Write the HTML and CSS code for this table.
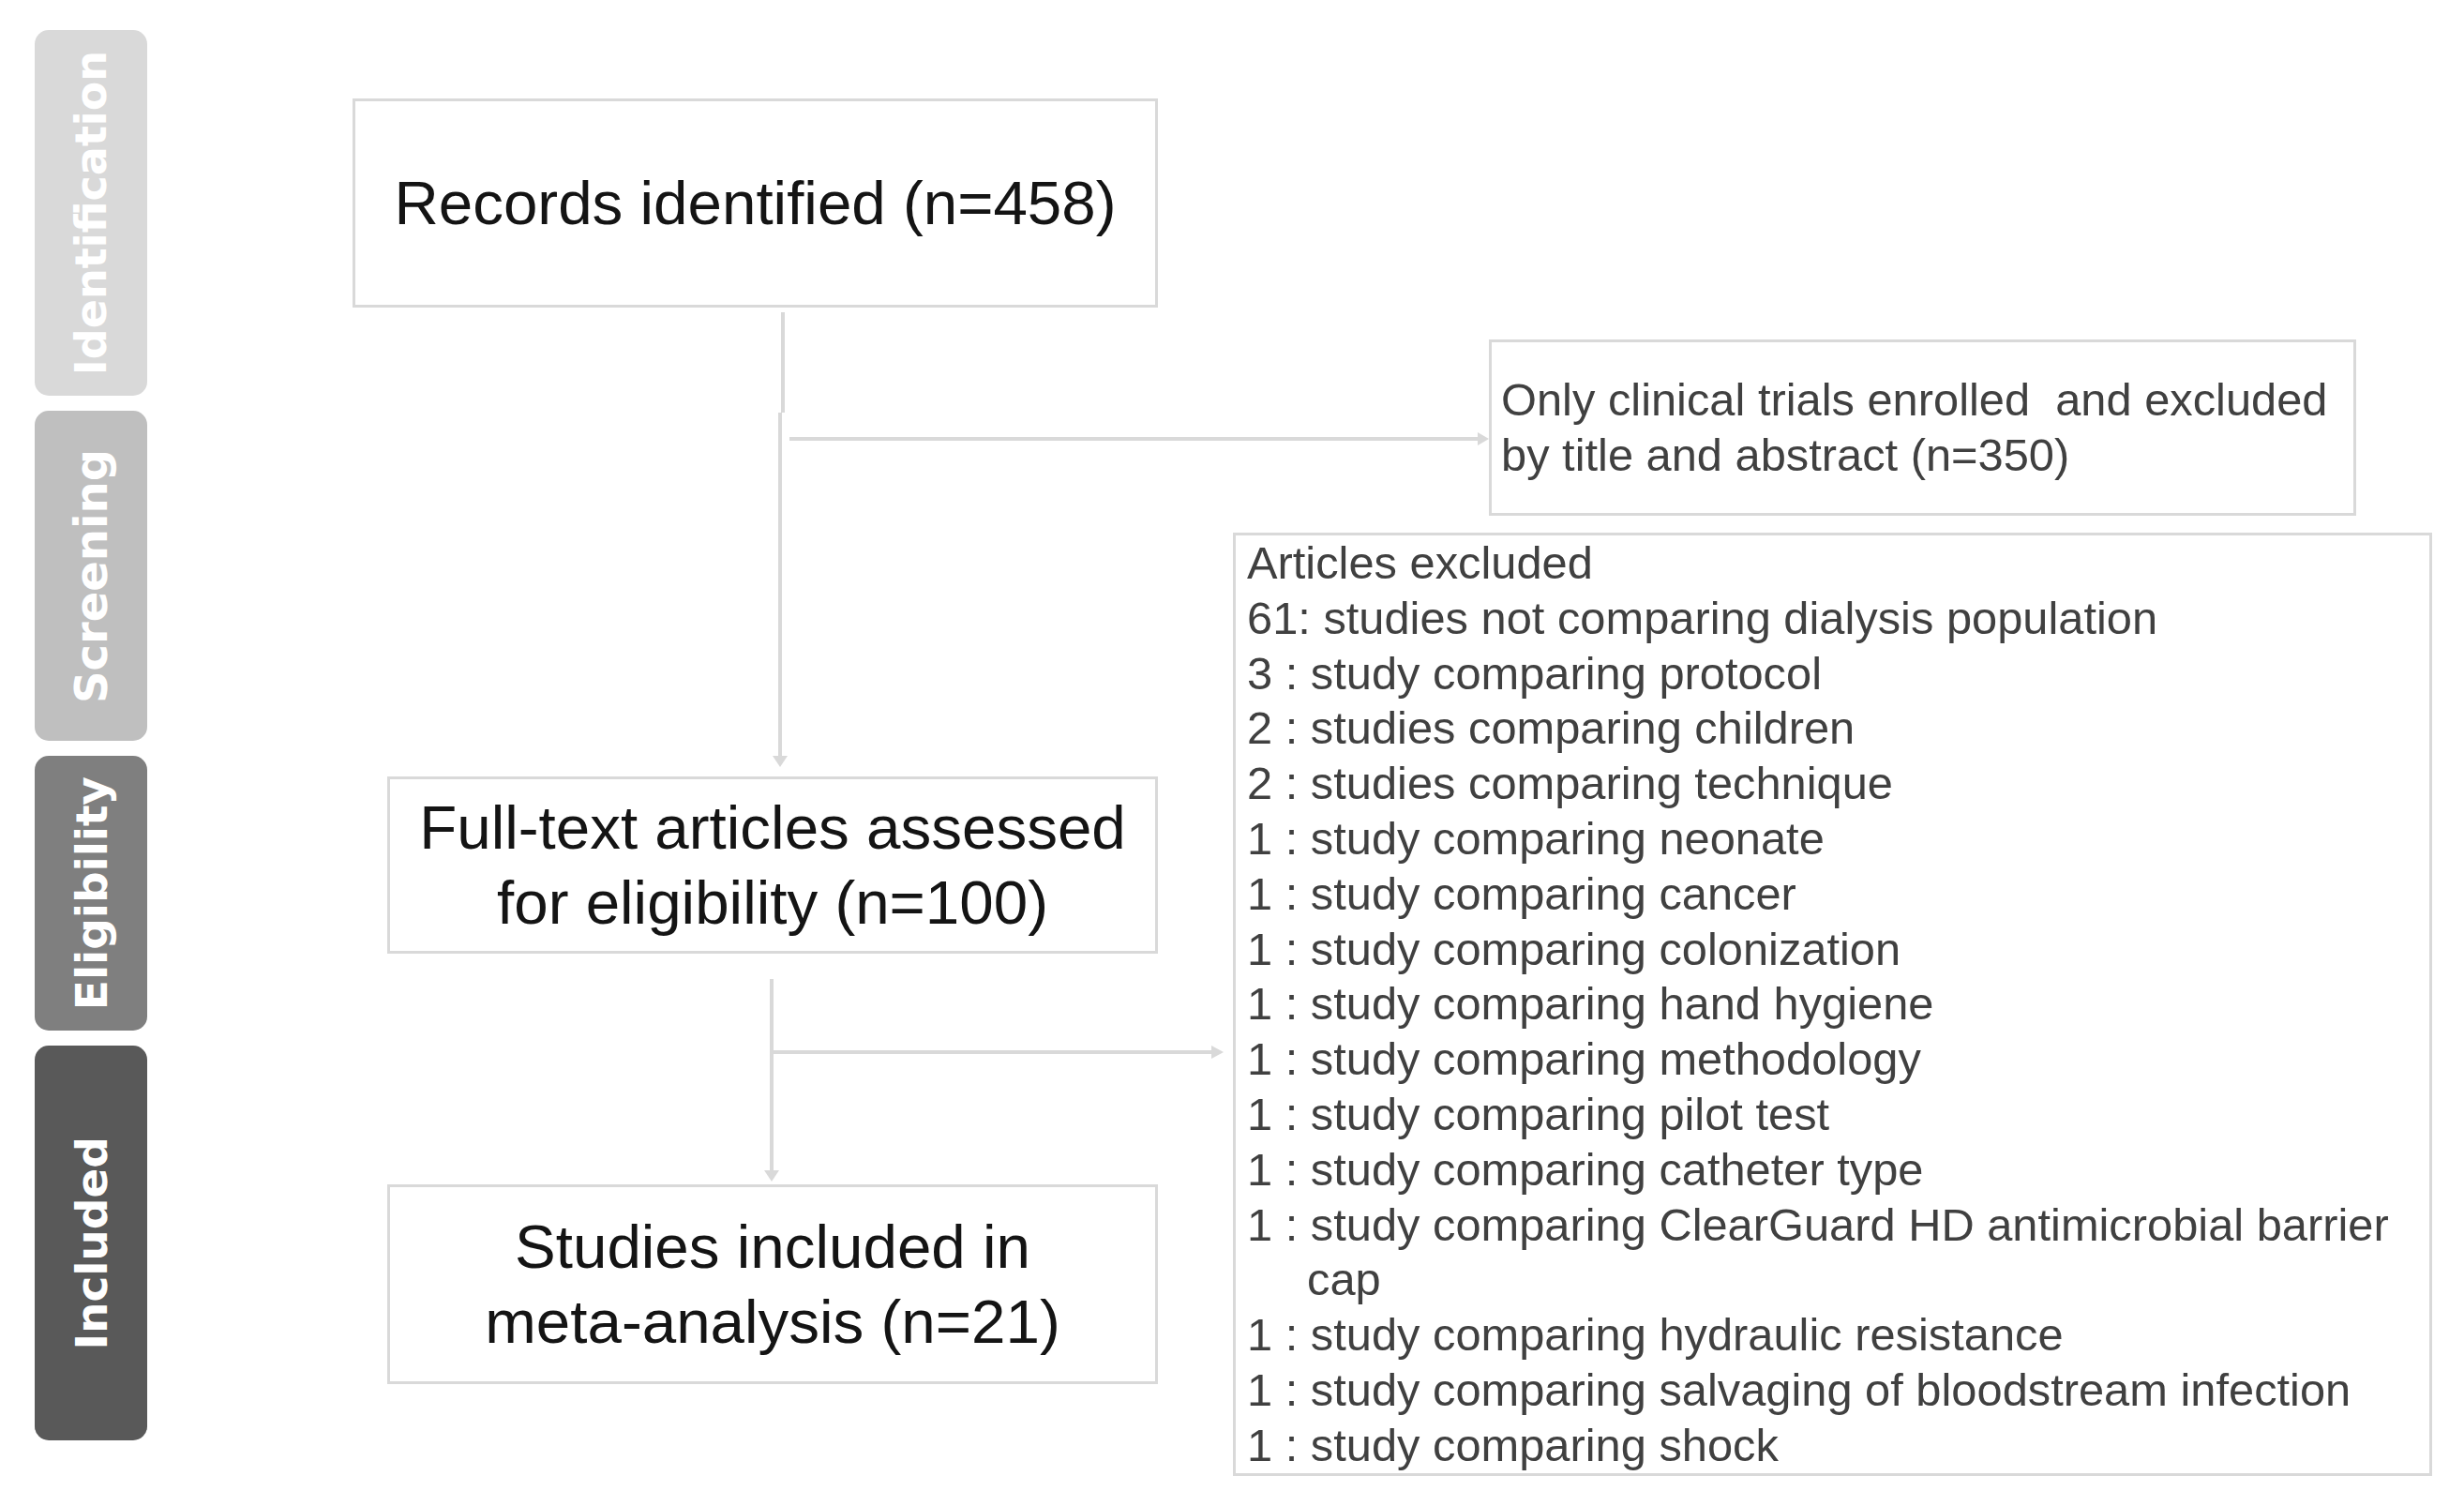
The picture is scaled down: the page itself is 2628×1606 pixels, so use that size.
FILE: index.html
```html
<!DOCTYPE html>
<html lang="en">
<head>
<meta charset="utf-8">
<title>PRISMA flow diagram</title>
<link rel="stylesheet" href="styles.css">
</head>
<body>
<div class="page">
  <div class="tabs">
    <div class="tab tab-identification"><span class="tab-label">Identification</span></div>
    <div class="tab tab-screening"><span class="tab-label">Screening</span></div>
    <div class="tab tab-eligibility"><span class="tab-label">Eligibility</span></div>
    <div class="tab tab-included"><span class="tab-label">Included</span></div>
  </div>

  <div class="box main-box records">Records identified (n=458)</div>

  <div class="box side-box only-trials">
    <p class="side-text">Only clinical trials enrolled&nbsp; and excluded<br>by title and abstract (n=350)</p>
  </div>

  <div class="box side-box excluded">
    <div class="ex-line">Articles excluded</div>
    <div class="ex-line">61: studies not comparing dialysis population</div>
    <div class="ex-line">3 : study comparing protocol</div>
    <div class="ex-line">2 : studies comparing children</div>
    <div class="ex-line">2 : studies comparing technique</div>
    <div class="ex-line">1 : study comparing neonate</div>
    <div class="ex-line">1 : study comparing cancer</div>
    <div class="ex-line">1 : study comparing colonization</div>
    <div class="ex-line">1 : study comparing hand hygiene</div>
    <div class="ex-line">1 : study comparing methodology</div>
    <div class="ex-line">1 : study comparing pilot test</div>
    <div class="ex-line">1 : study comparing catheter type</div>
    <div class="ex-line hanging">1 : study comparing ClearGuard HD antimicrobial barrier cap</div>
    <div class="ex-line">1 : study comparing hydraulic resistance</div>
    <div class="ex-line">1 : study comparing salvaging of bloodstream infection</div>
    <div class="ex-line">1 : study comparing shock</div>
  </div>

  <div class="box main-box fulltext">Full-text articles assessed<br>for eligibility (n=100)</div>

  <div class="box main-box studies">Studies included in<br>meta-analysis (n=21)</div>

  <svg class="connectors" width="2628" height="1606" viewBox="0 0 2628 1606" aria-hidden="true">
    <g fill="none" stroke="#d9d9d9" stroke-width="4">
      <path d="M835 333 V440"/>
      <path d="M832 440 V808"/>
      <path d="M842 468 H1578"/>
      <path d="M823 1044 V1250"/>
      <path d="M823 1122 H1294"/>
    </g>
    <g fill="#d9d9d9">
      <polygon points="824,806 840,806 832,818"/>
      <polygon points="1576,461 1576,475 1588,468"/>
      <polygon points="815,1248 831,1248 823,1260"/>
      <polygon points="1292,1115 1292,1129 1305,1122"/>
    </g>
  </svg>
</div>
</body>
</html>
```

FILE: styles.css
```css
html, body {
  margin: 0;
  padding: 0;
  background: #ffffff;
}

.page {
  position: relative;
  width: 2628px;
  height: 1606px;
  display: grid;
  grid-template-columns: 37px 120px 219px 37px 822px 80px 273px 925px 81px 34px;
  grid-template-rows: 105px 223px 34px 188px 18px 260px 189px 246px 213px 98px 32px;
  font-family: "Liberation Sans", Arial, sans-serif;
}

/* Stage tabs */
.tabs {
  grid-column: 2;
  grid-row: 1 / -1;
  display: flex;
  flex-direction: column;
  gap: 16px;
  padding-top: 32px;
}

.tab {
  display: flex;
  align-items: center;
  justify-content: center;
  border-radius: 15px;
  color: #ffffff;
}

.tab-label {
  writing-mode: vertical-rl;
  transform: rotate(180deg);
  font-family: "DejaVu Sans", Verdana, sans-serif;
  font-weight: bold;
  font-size: 47px;
  line-height: 1;
  white-space: nowrap;
}

.tab-identification { height: 390px; background: #d9d9d9; }
.tab-identification .tab-label { font-size: 46px; }
.tab-screening      { height: 352px; background: #bfbfbf; }
.tab-screening .tab-label { font-size: 48px; }
.tab-eligibility    { height: 293px; background: #7f7f7f; }
.tab-included       { height: 421px; background: #595959; }

/* Boxes */
.box {
  box-sizing: border-box;
  border: 3px solid #d9d9d9;
  background: #ffffff;
}

.main-box {
  display: flex;
  align-items: center;
  justify-content: center;
  text-align: center;
  font-size: 65.5px;
  line-height: 80px;
  color: #141414;
}

.records {
  grid-column: 4 / 6;
  grid-row: 2;
}

.fulltext {
  grid-column: 5;
  grid-row: 7;
}

.studies {
  grid-column: 5;
  grid-row: 9;
}

.side-box {
  color: #404040;
  font-size: 48.8px;
  line-height: 59px;
}

.only-trials {
  grid-column: 8;
  grid-row: 4;
  display: flex;
  align-items: center;
  padding-left: 10px;
}

.side-text {
  margin: 0;
  white-space: nowrap;
}

.excluded {
  grid-column: 7 / 10;
  grid-row: 6 / 11;
  padding: 0 10px 0 12px;
  line-height: 58.8px;
}

.ex-line {
  white-space: normal;
}

.hanging {
  padding-left: 64px;
  text-indent: -64px;
}

/* Connector overlay */
.connectors {
  position: absolute;
  left: 0;
  top: 0;
  pointer-events: none;
}
```
